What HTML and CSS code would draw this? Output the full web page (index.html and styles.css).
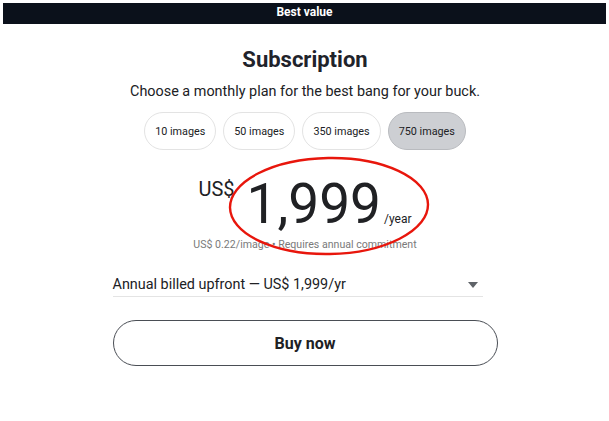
FILE: index.html
```html
<!DOCTYPE html>
<html>
<head>
<meta charset="utf-8">
<link rel="stylesheet" href="styles.css">
</head>
<body>
<div class="topbar">Best value</div>
<main class="plan">
  <h1 class="title">Subscription</h1>
  <p class="subtitle">Choose a monthly plan for the best bang for your buck.</p>
  <div class="pills">
    <button class="pill">10 images</button>
    <button class="pill">50 images</button>
    <button class="pill">350 images</button>
    <button class="pill pill-active">750 images</button>
  </div>
  <div class="price">
    <span class="currency">US$</span>
    <span class="amount">1,999</span>
    <span class="period">/year</span>
  </div>
  <p class="fine">US$ 0.22/image • Requires annual commitment</p>
  <div class="select">
    <span class="select-text">Annual billed upfront — US$ 1,999/yr</span>
    <svg class="caret" width="10" height="6" viewBox="0 0 10 6"><path d="M0 0h10L5 6z" fill="#5f6368"/></svg>
  </div>
  <button class="buy">Buy now</button>
</main>
<svg class="circle" width="210" height="106" viewBox="0 0 210 106">
  <ellipse cx="105" cy="53" rx="99" ry="48" fill="none" stroke="#e8160c" stroke-width="2.4" transform="rotate(-1 105 53)"/>
</svg>
</body>
</html>
```
FILE: styles.css
```css
* { box-sizing: border-box; }
html, body { margin: 0; padding: 0; background: #fff; }
body {
  position: relative;
  width: 609px;
  height: 421px;
  font-family: Roboto, "Noto Sans", sans-serif;
  color: #202124;
  overflow: hidden;
}
.topbar {
  margin: 3px 3px 0;
  height: 21px;
  background: #0b111b;
  color: #fff;
  font-size: 12px;
  font-weight: 700;
  line-height: 19px;
  text-align: center;
}
.plan {
  display: flex;
  flex-direction: column;
  align-items: center;
  padding-left: 1px;
}
.title {
  margin: 22px 0 0;
  font-size: 22px;
  line-height: 28px;
  font-weight: 700;
  color: #1f232b;
}
.subtitle {
  margin: 8px 0 0;
  font-size: 14.4px;
  line-height: 20px;
  color: #202124;
}
.pills {
  display: flex;
  gap: 7px;
  margin-top: 10px;
}
.pill {
  height: 38px;
  padding: 0 10px;
  border: 1px solid #e3e3e3;
  border-radius: 19px;
  background: #fff;
  font-family: inherit;
  font-size: 10.8px;
  color: #202124;
}
.pill-active {
  background: #cdcfd3;
  border-color: #b9bbbf;
}
.price {
  display: flex;
  align-items: baseline;
  margin-top: 26px;
  height: 56px;
}
.currency {
  align-self: flex-start;
  font-size: 20px;
  line-height: 20px;
  margin-top: 3px;
  margin-right: 12px;
  color: #202124;
}
.amount {
  font-size: 55px;
  line-height: 56px;
  color: #202124;
}
.period {
  font-size: 12px;
  margin-left: 3px;
  color: #202124;
}
.fine {
  margin: 6px 0 0;
  font-size: 10.6px;
  line-height: 14px;
  color: #7a7a7a;
}
.select {
  display: flex;
  align-items: center;
  justify-content: space-between;
  width: 370px;
  margin: 23px 15px 0 0;
  padding: 0 2px 1px 0;
  border-bottom: 1px solid #e4e4e4;
  font-size: 14.4px;
  line-height: 20px;
  color: #202124;
}
.caret { margin-right: 3px; }
.buy {
  margin-top: 23px;
  width: 385px;
  height: 46px;
  border: 1px solid #4a4e55;
  border-radius: 23px;
  background: #fff;
  font-family: inherit;
  font-size: 16px;
  font-weight: 700;
  color: #202124;
}
.circle {
  position: absolute;
  left: 224px;
  top: 153px;
}
```
